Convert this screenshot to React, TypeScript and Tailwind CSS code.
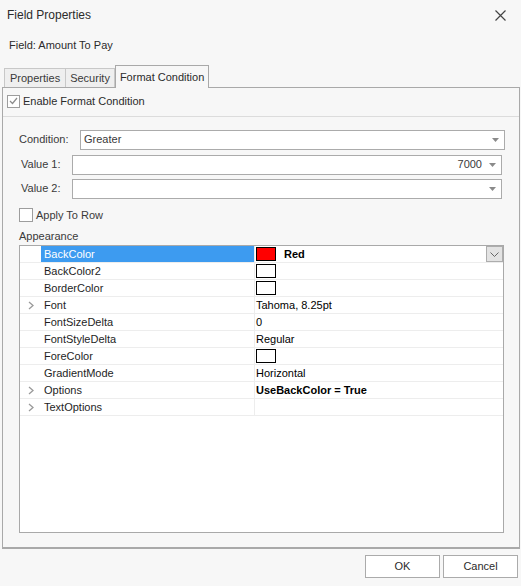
import React from "react";

type Row = {
  name: string;
  expand?: boolean;
  swatch?: string;
  value?: string;
  bold?: boolean;
  selected?: boolean;
};

const rows: Row[] = [
  { name: "BackColor", swatch: "#ff0000", value: "Red", bold: true, selected: true },
  { name: "BackColor2", swatch: "#ffffff" },
  { name: "BorderColor", swatch: "#ffffff" },
  { name: "Font", expand: true, value: "Tahoma, 8.25pt" },
  { name: "FontSizeDelta", value: "0" },
  { name: "FontStyleDelta", value: "Regular" },
  { name: "ForeColor", swatch: "#ffffff" },
  { name: "GradientMode", value: "Horizontal" },
  { name: "Options", expand: true, value: "UseBackColor = True", bold: true },
  { name: "TextOptions", expand: true },
];

const Arrow = () => (
  <svg width="7" height="4" viewBox="0 0 7 4" className="shrink-0">
    <path d="M0 0 H7 L3.5 4 Z" fill="#8a8a8a" />
  </svg>
);

const Chevron = () => (
  <svg width="6" height="9" viewBox="0 0 6 9">
    <polyline points="1,1 5,4.5 1,8" fill="none" stroke="#9a9a9a" strokeWidth="1.3" />
  </svg>
);

const Combo = ({ value, right }: { value?: string; right?: boolean }) => (
  <div className="flex h-[20px] flex-1 items-center border border-[#ababab] bg-white pl-[3px] pr-[5px]">
    <span className={right ? "flex-1 text-right pr-[7px]" : "flex-1"}>{value}</span>
    <Arrow />
  </div>
);

const PropRow = ({ row }: { row: Row }) => (
  <div className="flex h-[17px] border-b border-[#ededed]">
    <div className="flex w-[21px] items-center justify-center pl-[1px]">
      {row.expand && <Chevron />}
    </div>
    <div
      className={
        row.selected
          ? "flex w-[213px] items-center bg-[#3d9bf0] pl-[3px] text-white"
          : "flex w-[213px] items-center pl-[3px] text-[#1e1e1e]"
      }
    >
      {row.name}
    </div>
    <div className="flex flex-1 items-center border-l border-[#ededed] pl-[1px] text-black">
      {row.swatch && (
        <div
          className="mr-[8px] h-[14px] w-[20px] border border-black"
          style={{ backgroundColor: row.swatch }}
        />
      )}
      {row.value && (
        <span className={row.bold ? "flex-1 font-bold" : "flex-1"}>{row.value}</span>
      )}
      {row.selected && (
        <div className="flex h-[16px] w-[17px] items-center justify-center border border-[#adadad] bg-[#e3e3e3]">
          <svg width="9" height="5" viewBox="0 0 9 5">
            <polyline points="0.5,0.5 4.5,4.5 8.5,0.5" fill="none" stroke="#666" strokeWidth="1" />
          </svg>
        </div>
      )}
    </div>
  </div>
);

export default function App() {
  return (
    <div
      className="flex h-[586px] w-[521px] flex-col bg-[#f7f7f7] text-[11px] text-[#3a3a3a]"
      style={{ fontFamily: "Tahoma, 'Liberation Sans', Arial, sans-serif" }}
    >
      <div className="flex h-[30px] items-center justify-between pl-[7px] pr-[15px] text-[12px] text-[#2b2b2b]">
        <span>Field Properties</span>
        <svg width="11" height="11" viewBox="0 0 11 11">
          <path d="M0.5 0.5 L10.5 10.5 M10.5 0.5 L0.5 10.5" stroke="#444" strokeWidth="1.2" />
        </svg>
      </div>
      <div className="flex h-[30px] items-center pl-[9px] text-[#2b2b2b]">Field: Amount To Pay</div>

      <div className="relative z-10 flex h-[27px] items-end pl-[4px]">
        <div className="flex h-[19px] items-center border border-b-0 border-[#c8c8c8] bg-[#efefef] px-[5px]">
          Properties
        </div>
        <div className="flex h-[19px] items-center border border-b-0 border-l-0 border-[#c8c8c8] bg-[#efefef] px-[4px]">
          Security
        </div>
        <div className="-mb-px flex h-[23px] items-center border border-b-0 border-[#a9a9a9] bg-[#f7f7f7] px-[4px] pt-[1px] text-[#2b2b2b]">
          Format Condition
        </div>
      </div>

      <div className="ml-[2px] mr-[1px] flex h-[462px] flex-col border border-b-2 border-[#a9a9a9]">
        <div className="flex items-center pl-[4px] pt-[5px]">
          <div className="flex h-[13px] w-[13px] items-center justify-center border border-[#9d9d9d] bg-white">
            <svg width="9" height="8" viewBox="0 0 9 8">
              <polyline points="1,4 3.5,6.5 8,1" fill="none" stroke="#8c8c8c" strokeWidth="1.2" />
            </svg>
          </div>
          <span className="ml-[3px] text-[#2b2b2b]">Enable Format Condition</span>
        </div>

        <div className="mt-[6px] flex flex-1 flex-col border-t border-[#dcdcdc] pl-[16px] pr-[14px]">
          <div className="mt-[13px] flex items-center">
            <span className="w-[61px]">Condition:</span>
            <Combo value="Greater" />
          </div>
          <div className="mt-[5px] flex items-center pr-[3px]">
            <span className="w-[53px] pl-[2px]">Value 1:</span>
            <Combo value="7000" right />
          </div>
          <div className="mt-[4px] flex items-center pr-[3px]">
            <span className="w-[53px] pl-[2px]">Value 2:</span>
            <Combo />
          </div>

          <div className="mt-[8px] flex items-center">
            <div className="h-[14px] w-[14px] border border-[#9d9d9d] bg-white" />
            <span className="ml-[3px]">Apply To Row</span>
          </div>
          <div className="mt-[6px] leading-[14px]">Appearance</div>

          <div className="mt-[2px] mr-[1px] h-[288px] border border-[#a9a9a9] bg-white">
            {rows.map((r) => (
              <PropRow key={r.name} row={r} />
            ))}
          </div>
        </div>
      </div>

      <div className="mt-[6px] flex justify-end gap-[3px] pr-[3px]">
        <button className="flex h-[23px] w-[75px] items-center justify-center border border-[#ababab] bg-white text-[#2b2b2b]">
          OK
        </button>
        <button className="flex h-[23px] w-[75px] items-center justify-center border border-[#ababab] bg-white text-[#2b2b2b]">
          Cancel
        </button>
      </div>
    </div>
  );
}
